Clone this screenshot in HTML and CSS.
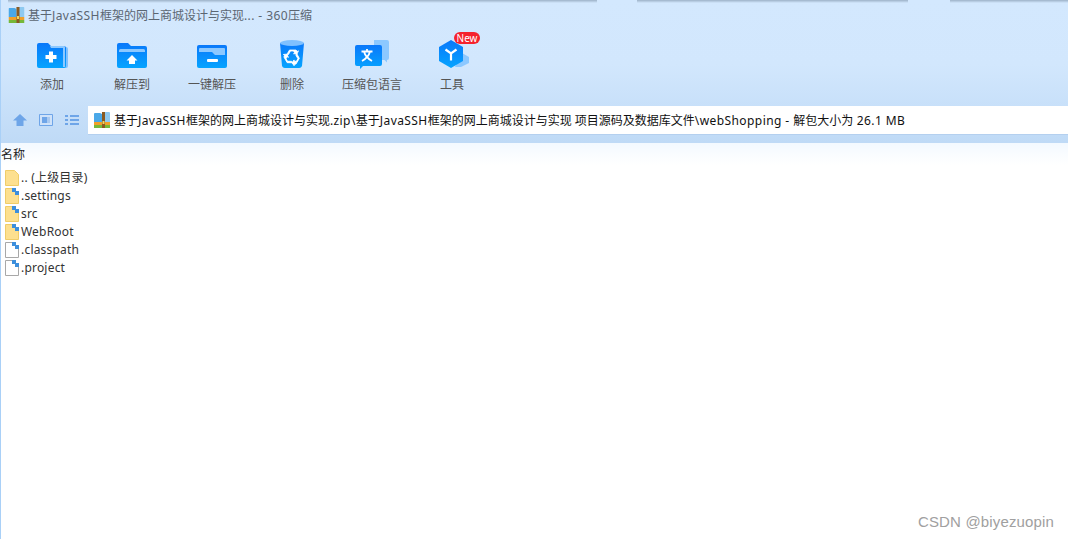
FILE: index.html
```html
<!DOCTYPE html>
<html lang="zh">
<head>
<meta charset="utf-8">
<title>360压缩</title>
<link rel="stylesheet" href="styles.css">
</head>
<body>
<div class="window">
  <div class="chrome">
    <div class="edge">
      <i class="shade s1"></i><i class="shade s2"></i><i class="shade s3"></i><i class="shade s4"></i>
    </div>
    <div class="titlebar">
      <svg class="zip" width="17" height="16" viewBox="0 0 16 16"><use href="#zipicon"/></svg>
      <span>基于<span class="lat">JavaSSH</span>框架的网上商城设计与实现<span class="lat">... - 360</span>压缩</span>
    </div>
    <div class="toolbar">
      <div class="tool">
        <svg width="34" height="30" viewBox="0 0 34 30">
          <path d="M28 6h3a2 2 0 0 1 2 2v17a2 2 0 0 1-2 2h-3z" fill="#7fc0ff"/>
          <path d="M2 4a2 2 0 0 1 2-2h9l3 3h13a2 2 0 0 1 2 2v18a2 2 0 0 1-2 2H4a2 2 0 0 1-2-2z" fill="url(#blue)"/>
          <path d="M15 5h14a1 1 0 0 1 1 1v20h-2V7H16z" fill="#8cc8ff"/>
          <path d="M14 10.500h4v3.500h3.500v4H18v3.500h-4V18h-3.500v-4H14z" fill="#fff"/>
        </svg>
        <span>添加</span>
      </div>
      <div class="tool">
        <svg width="34" height="30" viewBox="0 0 34 30">
          <path d="M2 4a2 2 0 0 1 2-2h9l3 3h14a2 2 0 0 1 2 2v18a2 2 0 0 1-2 2H4a2 2 0 0 1-2-2z" fill="url(#blue)"/>
          <path d="M4 11V9.500A1.500 1.500 0 0 1 5.500 8h23A1.500 1.500 0 0 1 30 9.500V11z" fill="#8cc8ff"/>
          <path d="M17 14l5.500 5.500H20V23h-6v-3.500h-2.500z" fill="#fff"/>
        </svg>
        <span>解压到</span>
      </div>
      <div class="tool">
        <svg width="34" height="30" viewBox="0 0 34 30">
          <rect x="2" y="4" width="30" height="23" rx="2" fill="url(#blue)"/>
          <path d="M4 8a1 1 0 0 1 1-1h24a1 1 0 0 1 1 1v6H20l-3-3H4z" fill="#8cc8ff"/>
          <rect x="12" y="18" width="11" height="3" rx="1" fill="#fff"/>
        </svg>
        <span>一键解压</span>
      </div>
      <div class="tool">
        <svg width="34" height="30" viewBox="0 0 34 30">
          <path d="M5 2l2 23a3 3 0 0 0 3 2h14a3 3 0 0 0 3-2l2-23z" fill="url(#blue)"/>
          <ellipse cx="17" cy="2" rx="12" ry="3" fill="#7fc0ff"/>
          <g transform="translate(17 16)" fill="#fff" stroke="#fff" stroke-width=".8">
            <path d="M-3.500-2.500L-1.500-6h3l1.200 2-1.200.7 3.500.3 1.500-3.200-1.200.6L4 -7h-6.500l-3 5z"/>
            <path d="M-3.500-2.500L-1.500-6h3l1.200 2-1.200.7 3.500.3 1.500-3.200-1.200.6L4 -7h-6.500l-3 5z" transform="rotate(120)"/>
            <path d="M-3.500-2.500L-1.500-6h3l1.200 2-1.200.7 3.500.3 1.500-3.200-1.200.6L4 -7h-6.500l-3 5z" transform="rotate(240)"/>
          </g>
        </svg>
        <span>删除</span>
      </div>
      <div class="tool">
        <svg width="34" height="30" viewBox="0 0 34 30">
          <path d="M19 -1h13a2 2 0 0 1 2 2v16a2 2 0 0 1-2 2v2.500L29.500 19H19z" fill="#8cc8ff"/>
          <path d="M2 4h23a2 2 0 0 1 2 2v17a2 2 0 0 1-2 2H8l-3 3v-3H2a2 2 0 0 1-2-2V6a2 2 0 0 1 2-2z" fill="url(#blue)"/>
          <path d="M6.500 10.500h11M12 8v2.500M15 10.500c-1 4-3.500 7-8 9.500M9 10.500c1 4 3.500 7 8 9.500" fill="none" stroke="#fff" stroke-width="1.800"/>
        </svg>
        <span>压缩包语言</span>
      </div>
      <div class="tool">
        <svg width="34" height="30" viewBox="0 0 34 30">
          <path d="M27 12l7 4v6l-8 4h-6z" fill="#8cc8ff"/>
          <path d="M16 -1l12 7v14l-12 7-12-7V6z" fill="url(#blue)"/>
          <path d="M10.500 8.500L16 12.500l5.500-4M16 12.500V19.500" fill="none" stroke="#fff" stroke-width="2.200"/>
        </svg>
        <span>工具</span>
        <b class="badge">New</b>
      </div>
    </div>
    <div class="navbar">
      <div class="navicons">
        <svg width="14" height="14" viewBox="0 0 14 14"><path d="M7 1l7 6.500h-3.500V13h-7V7.500H0z" fill="#6ea5e8"/></svg>
        <svg width="14" height="14" viewBox="0 0 14 14"><path d="M.5 1.500h13v11H.5z" fill="#cfe2f9" stroke="#6ea5e8"/><rect x="3" y="4" width="5" height="6" fill="#6ea5e8"/><rect x="8" y="4" width="3" height="6" fill="#a9c9f0"/></svg>
        <svg width="14" height="14" viewBox="0 0 14 14"><path d="M0 2h3v2H0zM5 2h9v2H5zM0 6h3v2H0zM5 6h9v2H5zM0 10h3v2H0zM5 10h9v2H5z" fill="#6ea5e8"/></svg>
      </div>
      <div class="address">
        <svg class="zip" width="16" height="16" viewBox="0 0 16 16"><use href="#zipicon"/></svg>
        <span>基于<span class="lat">JavaSSH</span>框架的网上商城设计与实现<span class="lat">.zip\</span>基于<span class="lat">JavaSSH</span>框架的网上商城设计与实现 项目源码及数据库文件<span class="lat">\webShopping - </span>解包大小为<span class="lat"> 26.1 MB</span></span>
      </div>
    </div>
  </div>
  <div class="list">
    <div class="listhead">名称</div>
    <div class="row">
      <svg width="14" height="16" viewBox="0 0 14 16"><path d="M.5.500h9l4 4v11H.5z" fill="#fde08f" stroke="#f0cd68"/></svg>
      <span>.. (上级目录)</span>
    </div>
    <div class="row">
      <svg width="14" height="16" viewBox="0 0 14 16"><use href="#folderfile"/></svg>
      <span>.settings</span>
    </div>
    <div class="row">
      <svg width="14" height="16" viewBox="0 0 14 16"><use href="#folderfile"/></svg>
      <span>src</span>
    </div>
    <div class="row">
      <svg width="14" height="16" viewBox="0 0 14 16"><use href="#folderfile"/></svg>
      <span>WebRoot</span>
    </div>
    <div class="row">
      <svg width="14" height="16" viewBox="0 0 14 16"><use href="#plainfile"/></svg>
      <span>.classpath</span>
    </div>
    <div class="row">
      <svg width="14" height="16" viewBox="0 0 14 16"><use href="#plainfile"/></svg>
      <span>.project</span>
    </div>
  </div>
  <div class="watermark">CSDN @biyezuopin</div>
</div>
<svg class="defs" width="0" height="0">
  <defs>
    <linearGradient id="blue" x1="0" y1="0" x2="0" y2="1">
      <stop offset="0" stop-color="#0a78fa"/><stop offset="1" stop-color="#06a4ff"/>
    </linearGradient>
    <symbol id="zipicon" viewBox="0 0 16 16">
      <path d="M0 2a1 1 0 0 1 1-1h5l2 1v8H0z" fill="#4aa8e8"/>
      <path d="M8 0h7a1 1 0 0 1 1 1v9H8z" fill="#8ec9f0"/>
      <rect y="10" width="16" height="3" fill="#f0a02a"/>
      <rect y="13" width="16" height="3" fill="#76b83a"/>
      <rect x="8" y="0" width="3" height="16" fill="#8a5a22"/>
      <rect x="8.500" y="9" width="2" height="3" fill="#f4d45a"/>
    </symbol>
    <symbol id="folderfile" viewBox="0 0 14 16">
      <path d="M.5.500h8l5 5v10H.5z" fill="#fde08f" stroke="#f0cd68"/>
      <path d="M7 0h4v3h3v4h-4V4H7z" fill="#3d8fdc"/>
    </symbol>
    <symbol id="plainfile" viewBox="0 0 14 16">
      <path d="M.5.500h8l5 5v10H.5z" fill="#fff" stroke="#a8a8a8"/>
      <path d="M7 0h4v3h3v4h-4V4H7z" fill="#3d8fdc"/>
    </symbol>
  </defs>
</svg>
</body>
</html>
```
FILE: styles.css
```css
* { box-sizing: border-box; }
html, body { margin: 0; height: 100%; overflow: hidden; background: #fff; }
body { font-family: "Noto Sans", "Noto Sans CJK SC", sans-serif; font-size: 12px; color: #222; }
.window { position: relative; width: 1068px; height: 539px; border-left: 1px solid #a9d0f7; display: flex; flex-direction: column; }
.chrome { height: 143px; background: linear-gradient(#d3e8fe 0, #d2e7fd 45%, #bfdaf6 100%); display: flex; flex-direction: column; }
.edge { height: 4px; display: flex; }
.shade { display: block; height: 3px; background: linear-gradient(#9db2c8, #d3e8fe); }
.s1 { width: 7px; visibility: hidden; }
.s2 { width: 589px; }
.s3 { width: 271px; margin-left: 40px; }
.s4 { flex: 1; margin-left: 42px; }
.lat { letter-spacing: .42px; }
.titlebar { height: 24px; padding: 0 0 0 7px; display: flex; align-items: center; gap: 3px; color: #5b6672; line-height: 16px; }
.titlebar .zip { margin-top: -2px; }
.toolbar { height: 71px; padding: 13px 0 0 11px; display: flex; }
.tool { position: relative; width: 80px; display: flex; flex-direction: column; align-items: center; color: #555; }
.tool svg { flex: none; overflow: visible; }
.tool span { margin-top: 6px; line-height: 16px; }
.badge { position: absolute; left: 42px; top: -9px; width: 26px; height: 12px; border-radius: 6px; background: #f5222d; color: #fff; font: 400 10px/12px "Noto Sans", sans-serif; text-align: center; }
.navbar { height: 44px; padding-top: 7px; display: flex; align-items: flex-start; }
.navicons { width: 87px; height: 28px; padding-left: 12px; display: flex; align-items: center; gap: 12px; }
.address { flex: 1; height: 28px; background: #fff; padding-left: 6px; display: flex; align-items: center; gap: 4px; color: #111; white-space: nowrap; box-shadow: 0 1px 0 #b4d0ef; }
.list { flex: 1; background: linear-gradient(#f3f9ff 0, #fff 22px); }
.listhead { height: 26px; padding-top: 3px; line-height: 17px; }
.row { height: 18px; padding-left: 4px; display: flex; align-items: center; gap: 2px; line-height: 18px; color: #333; letter-spacing: .2px; }
.row svg { flex: none; }
.watermark { position: absolute; right: 14px; bottom: 9px; font: 15px/16px "Liberation Sans", sans-serif; color: #a0a0a0; letter-spacing: .15px; }
.defs { position: absolute; }
```
